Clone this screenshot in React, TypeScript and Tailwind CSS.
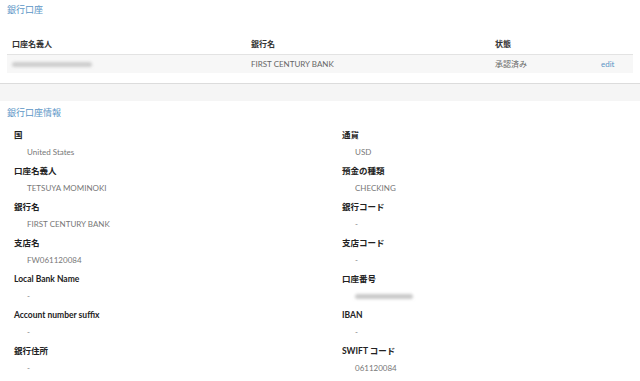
import React from "react";

const font = { fontFamily: '"Lato", "Noto Sans CJK JP", sans-serif' };

const fields: [string, string | null][][] = [
  [["国", "United States"], ["通貨", "USD"]],
  [["口座名義人", "TETSUYA MOMINOKI"], ["預金の種類", "CHECKING"]],
  [["銀行名", "FIRST CENTURY BANK"], ["銀行コード", "-"]],
  [["支店名", "FW061120084"], ["支店コード", "-"]],
  [["Local Bank Name", "-"], ["口座番号", null]],
  [["Account number suffix", "-"], ["IBAN", "-"]],
  [["銀行住所", "-"], ["SWIFT コード", "061120084"]],
];

function Blurred({ width }: { width: number }) {
  return (
    <div className="flex h-[18px] items-center">
      <div className="h-[5px] rounded-sm bg-[#c9c9c9] blur-[1.5px]" style={{ width }} />
    </div>
  );
}

function Field({ label, value }: { label: string; value: string | null }) {
  return (
    <div className="mb-[2px]">
      <div className="text-[8.5px] font-bold leading-[16px] text-[#222]">{label}</div>
      <div className="pl-[13px]">
        {value === null ? (
          <Blurred width={58} />
        ) : (
          <div className="text-[8px] leading-[18px] text-[#777]">{value}</div>
        )}
      </div>
    </div>
  );
}

export default function App() {
  return (
    <div className="h-[381px] w-[640px] overflow-hidden bg-white" style={font}>
      {/* 銀行口座 */}
      <section className="px-[7px] pt-[4px]">
        <h2 className="text-[9px] leading-[12px] text-[#5b95c6]">銀行口座</h2>
        <div className="mt-[17px] w-[626px]">
          <div className="grid h-[21px] grid-cols-[239px_244px_106px_1fr] items-center pl-[5px] text-[8px] font-bold text-[#333]">
            <div>口座名義人</div>
            <div>銀行名</div>
            <div>状態</div>
            <div />
          </div>
          <div className="grid h-[19px] grid-cols-[239px_244px_106px_1fr] items-center border-t border-[#e3e3e3] bg-[#f7f7f7] pl-[5px] text-[8px] text-[#666]">
            <div className="flex items-center">
              <div className="h-[5px] w-[80px] rounded-sm bg-[#cdcdcd] blur-[1.5px]" />
            </div>
            <div>FIRST CENTURY BANK</div>
            <div>承認済み</div>
            <div className="text-[#5b95c6]">edit</div>
          </div>
        </div>
      </section>

      <div className="mt-[10px] h-[18px] border-t border-[#dcdcdc] bg-[#f5f5f5]" />

      {/* 銀行口座情報 */}
      <section className="px-[7px] pt-[6px]">
        <h2 className="text-[9px] leading-[12px] text-[#5b95c6]">銀行口座情報</h2>
        <div className="mt-[8px] grid grid-cols-[328px_1fr] pl-[7px]">
          {fields.map(([l, r], i) => (
            <React.Fragment key={i}>
              <Field label={l[0]} value={l[1]} />
              <Field label={r[0]} value={r[1]} />
            </React.Fragment>
          ))}
        </div>
      </section>
    </div>
  );
}
